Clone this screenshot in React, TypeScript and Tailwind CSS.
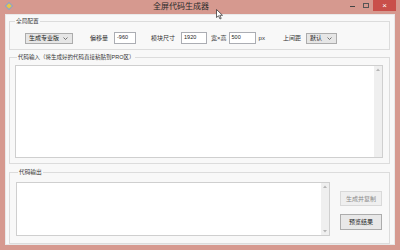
const font = { fontFamily: '"Liberation Sans", "Noto Sans CJK SC", sans-serif' };

const Chevron = () => (
  <svg width="5" height="3" viewBox="0 0 5 3" className="shrink-0">
    <path d="M0.5 0.5 L2.5 2.5 L4.5 0.5" fill="none" stroke="#555" strokeWidth="0.8" />
  </svg>
);

const FakeSelect = ({ value, className }: { value: string; className: string }) => (
  <div
    className={`flex h-[11px] items-center justify-between border border-[#acacac] bg-[#e6e6e6] pl-[3px] pr-[4px] text-[6px] leading-none text-[#222] ${className}`}
  >
    <span>{value}</span>
    <Chevron />
  </div>
);

const TextBox = ({ value, className }: { value: string; className: string }) => (
  <div
    className={`flex h-[12px] items-center border border-[#abadb3] bg-white pl-[2px] text-[5.5px] leading-none text-[#222] ${className}`}
  >
    {value}
  </div>
);

const Label = ({ text, className }: { text: string; className: string }) => (
  <span className={`text-[6px] leading-none text-[#333] ${className}`}>{text}</span>
);

const ScrollBar = ({ bottomArrow }: { bottomArrow?: boolean }) => (
  <div className="flex w-[8px] flex-col items-center justify-between bg-[#efefef] py-[2px]">
    <svg width="4" height="3" viewBox="0 0 4 3">
      <path d="M0 3 L2 0.5 L4 3 Z" fill="#b5b5b5" />
    </svg>
    {bottomArrow && (
      <svg width="4" height="3" viewBox="0 0 4 3">
        <path d="M0 0 L2 2.5 L4 0 Z" fill="#b5b5b5" />
      </svg>
    )}
  </div>
);

export default function App() {
  return (
    <div style={font} className="relative flex h-[250px] w-[400px] flex-col bg-[#d6998f]">
      {/* title bar */}
      <div className="relative flex h-[17px] items-start">
        <div className="ml-[6px] mt-[3px] flex h-[6px] w-[6px] items-center justify-center">
          <div className="h-[4px] w-[4px] rotate-45 bg-[#e8c64a] ring-1 ring-[#8aa3c9]" />
        </div>
        <div className="flex-1 pt-[2px] text-center text-[8px] leading-[10px] text-[#2b2b2b]">
          全屏代码生成器
        </div>
        <div className="flex items-start">
          <div className="mt-[6px] h-[1px] w-[5px] bg-[#444]" />
          <div className="ml-[8px] mt-[3px] h-[5px] w-[6px] border border-[#555]" />
          <div className="ml-[4px] mr-[4px] flex h-[11px] w-[23px] items-center justify-center bg-[#c94f4a] text-[8px] leading-none text-white">
            ×
          </div>
        </div>
        {/* mouse cursor */}
        <svg width="8" height="11" viewBox="0 0 8 11" className="absolute left-[216px] top-[9px]">
          <path d="M0.5 0.5 L0.5 8.5 L2.5 6.8 L4 10 L5.2 9.4 L3.8 6.3 L6.5 6.3 Z" fill="#fff" stroke="#222" strokeWidth="0.7" />
        </svg>
      </div>

      {/* client area */}
      <div className="mx-[5px] mb-[5px] flex flex-1 flex-col border border-[#e9e9e9] bg-[#f8f8f8] pl-[3px] pr-[4px]">
        {/* 全局配置 */}
        <fieldset className="mt-[2px] border border-[#dcdcdc] pb-[5px] pt-[7px]">
          <legend className="ml-[5px] px-[1px] text-[5.7px] leading-[8px] text-[#333]">全局配置</legend>
          <div className="flex items-center">
            <FakeSelect value="生成专业版" className="ml-[15px] w-[48px]" />
            <Label text="偏移量" className="ml-[17px]" />
            <TextBox value="-960" className="ml-[6px] w-[22px]" />
            <Label text="模块尺寸" className="ml-[15px]" />
            <TextBox value="1920" className="ml-[6px] w-[26px]" />
            <Label text="宽×高" className="ml-[4px]" />
            <TextBox value="500" className="ml-[2px] w-[27px]" />
            <Label text="px" className="ml-[3px]" />
            <Label text="上间距" className="ml-[18px]" />
            <FakeSelect value="默认" className="ml-[5px] w-[31px]" />
          </div>
        </fieldset>

        {/* 代码输入 */}
        <fieldset className="mt-[3px] border border-[#dcdcdc] pb-[5px] pl-[5px] pr-[6px] pt-[4px]">
          <legend className="ml-[2px] px-[1px] text-[5.5px] leading-[8px] text-[#333]">
            代码输入（将生成好的代码直接粘贴到PRO区）
          </legend>
          <div className="flex h-[93px] border border-[#cfcfcf] bg-white">
            <div className="flex-1" />
            <ScrollBar />
          </div>
        </fieldset>

        {/* 代码输出 */}
        <fieldset className="mt-[4px] border border-[#dcdcdc] pb-[7px] pl-[6px] pr-[7px] pt-[6px]">
          <legend className="ml-[2px] px-[1px] text-[5.7px] leading-[8px] text-[#333]">代码输出</legend>
          <div className="flex">
            <div className="flex h-[54px] w-[314px] border border-[#cfcfcf] bg-white">
              <div className="flex-1" />
              <ScrollBar bottomArrow />
            </div>
            <div className="ml-[10px] flex flex-col pt-[9px]">
              <div className="flex h-[15px] w-[42px] items-center justify-center border border-[#d9d9d9] bg-[#efefef] text-[6px] leading-none text-[#8a8a8a]">
                生成并复制
              </div>
              <div className="mt-[8px] flex h-[16px] w-[42px] items-center justify-center border border-[#acacac] bg-[#e8e8e8] text-[6px] leading-none text-[#222]">
                预览结果
              </div>
            </div>
          </div>
        </fieldset>
      </div>
    </div>
  );
}
